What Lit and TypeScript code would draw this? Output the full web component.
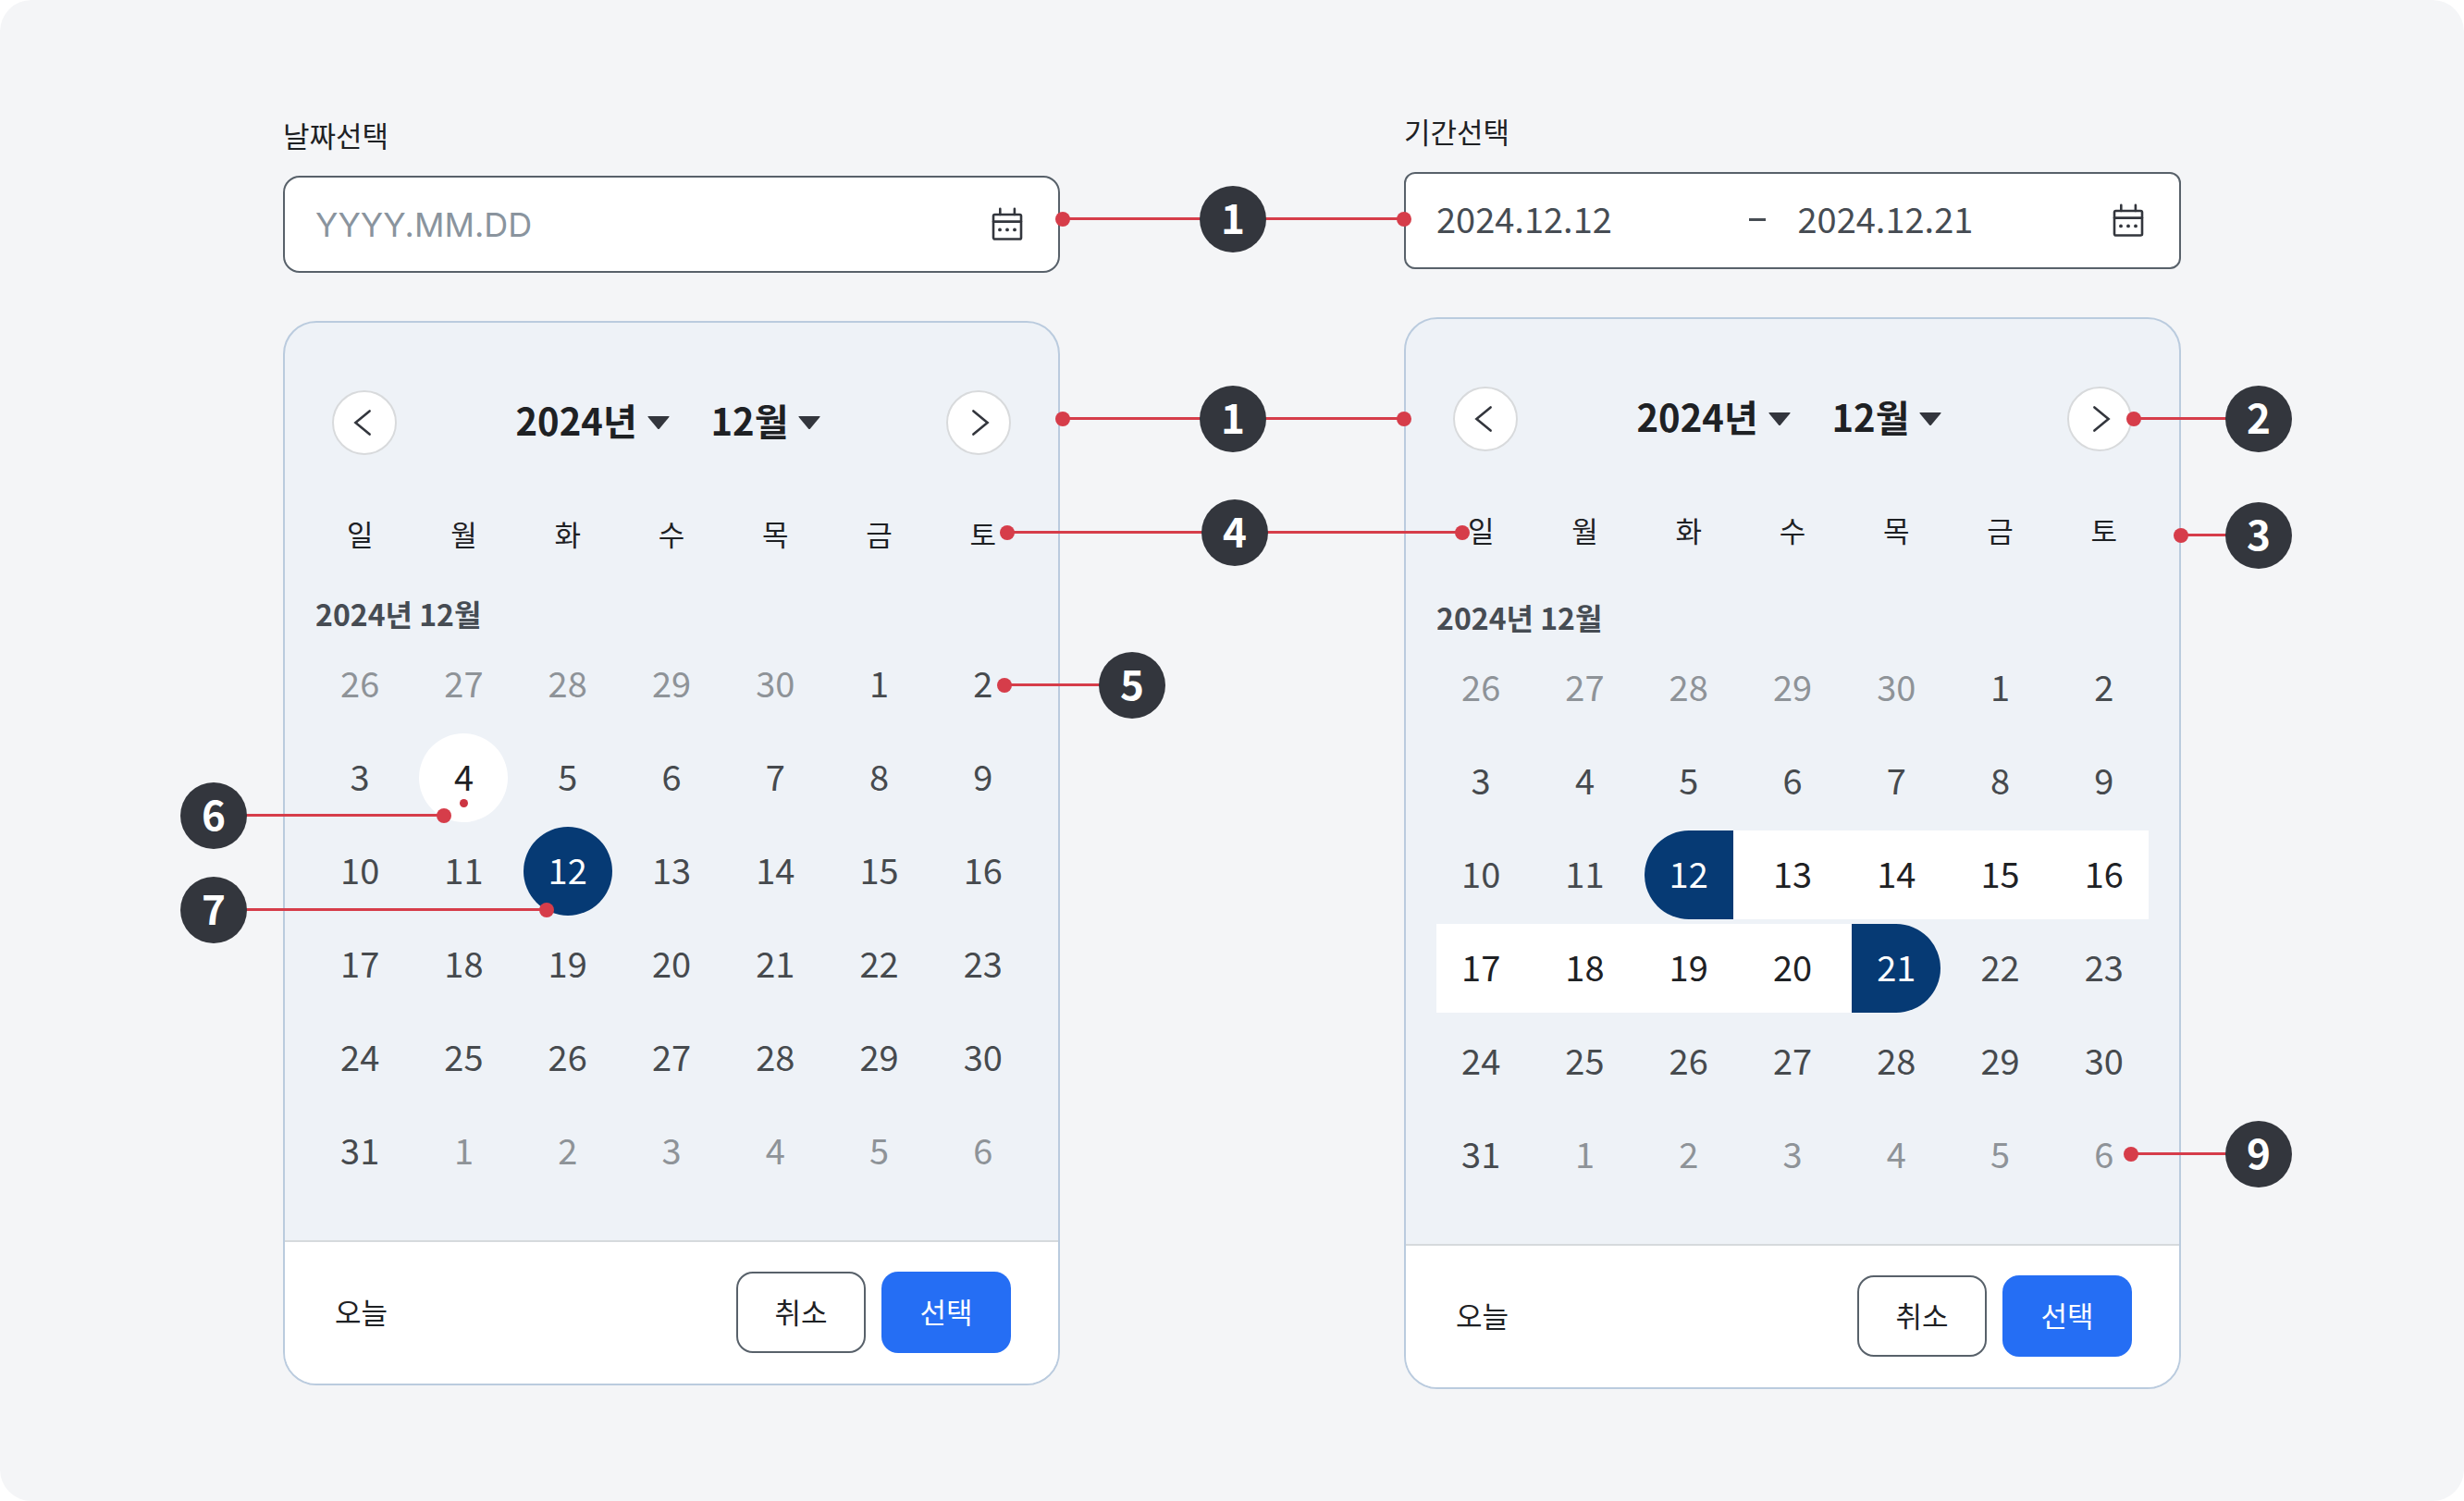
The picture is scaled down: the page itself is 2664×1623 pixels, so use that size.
import { LitElement, html, css, svg, nothing } from "lit";
import { customElement, property } from "lit/decorators.js";
import { classMap } from "lit/directives/class-map.js";
import { styleMap } from "lit/directives/style-map.js";

const WEEKDAYS = ["일", "월", "화", "수", "목", "금", "토"];

/** Width of the canvas on which the callout positions are given. */
const CANVAS = 2664;
const pct = (x: number) => `${(x / CANVAS) * 100}%`;

interface Day {
  label: number;
  outside: boolean;
}

function buildWeeks(): Day[][] {
  const days: Day[] = [];
  for (let d = 26; d <= 30; d++) days.push({ label: d, outside: true });
  for (let d = 1; d <= 31; d++) days.push({ label: d, outside: false });
  for (let d = 1; d <= 6; d++) days.push({ label: d, outside: true });
  const weeks: Day[][] = [];
  for (let i = 0; i < days.length; i += 7) weeks.push(days.slice(i, i + 7));
  return weeks;
}

const reset = css`
  * {
    box-sizing: border-box;
  }
  button,
  input,
  select {
    font: inherit;
    color: inherit;
    margin: 0;
    padding: 0;
    border: 0;
    background: none;
  }
  button,
  select {
    cursor: pointer;
  }
  svg {
    display: block;
    fill: none;
  }
`;

const calendarIcon = html`
  <svg class="icon" width="40" height="40" viewBox="0 0 40 40" aria-hidden="true">
    ${svg`
      <rect x="5" y="10" width="30" height="26.5" rx="1.6" stroke="#33363d" stroke-width="2.6"/>
      <path d="M5 17.6H35M12.3 3.8V10M27.9 3.8V10" stroke="#33363d" stroke-width="2.6" stroke-linecap="round"/>
      <circle cx="12" cy="26.4" r="1.9" fill="#33363d"/>
      <circle cx="20" cy="26.4" r="1.9" fill="#33363d"/>
      <circle cx="28" cy="26.4" r="1.9" fill="#33363d"/>
    `}
  </svg>
`;

@customElement("date-field")
export class DateField extends LitElement {
  @property() label = "";
  @property({ type: Boolean }) range = false;
  @property() start = "";
  @property() end = "";

  static styles = [
    reset,
    css`
      :host {
        display: block;
      }
      .label {
        display: block;
        height: 40px;
        margin-bottom: 22px;
        font-size: 31px;
        line-height: 36px;
        color: #1e2124;
      }
      .box {
        display: flex;
        align-items: center;
        height: 105px;
        padding: 0 35px 2px 33px;
        border: 2px solid #58616a;
        border-radius: 18px;
        background: #fff;
        color: #464c53;
        font-size: 38px;
      }
      .box.range {
        border-radius: 12px;
      }
      .input {
        flex: 1 1 0;
        min-width: 0;
        height: 60px;
        padding-bottom: 4px;
        line-height: 56px;
        outline: none;
      }
      .input::placeholder {
        color: #8a949e;
        font-family: Inter, sans-serif;
        font-size: 36px;
        opacity: 1;
      }
      .dash {
        flex: none;
        width: 18px;
        height: 3px;
        margin-right: 35px;
        background: #464c53;
      }
    `,
  ];

  render() {
    return html`
      <label class="label" for="start">${this.label}</label>
      <div class=${classMap({ box: true, range: this.range })}>
        <input id="start" class="input" type="text" placeholder="YYYY.MM.DD" .value=${this.start} />
        ${this.range
          ? html`<span class="dash"></span>
              <input class="input" type="text" aria-label="종료일" .value=${this.end} />`
          : nothing}
        <button type="button" aria-label="달력 열기">${calendarIcon}</button>
      </div>
    `;
  }
}

@customElement("calendar-card")
export class CalendarCard extends LitElement {
  @property({ type: Number }) today = 0;
  @property({ type: Number }) from = 0;
  @property({ type: Number }) to = 0;

  static styles = [
    reset,
    css`
      :host {
        display: block;
      }
      .card {
        overflow: hidden;
        border: 2px solid #bacbde;
        border-radius: 36px;
        background: #eef2f7;
      }
      .head {
        display: flex;
        align-items: center;
        justify-content: space-between;
        padding: 73px 51px 0;
      }
      .nav {
        display: grid;
        place-items: center;
        width: 70px;
        height: 70px;
        border: 2px solid #d8dadc;
        border-radius: 50%;
        background: #fff;
      }
      .picks {
        display: flex;
        gap: 37px;
      }
      .pick {
        display: flex;
        align-items: center;
        gap: 2px;
      }
      .select {
        appearance: none;
        height: 60px;
        padding-bottom: 6px;
        color: #1e2124;
        font-size: 40px;
        font-weight: 700;
        line-height: 54px;
      }
      .table {
        display: block;
        margin: 67px 25px 48px;
      }
      .thead,
      .tbody {
        display: block;
      }
      .row {
        display: grid;
        grid-template-columns: repeat(7, minmax(0, 1fr));
        margin-top: 5px;
      }
      .names {
        margin: 0;
      }
      .name {
        height: 40px;
        padding: 0;
        color: #1e2124;
        font-size: 31px;
        font-weight: 400;
        line-height: 36px;
      }
      .month-row {
        display: block;
        margin: 46px 0 7px;
      }
      .ranged .month-row {
        margin-top: 54px;
      }
      .month-row + .row {
        margin-top: 0;
      }
      .month {
        display: block;
        height: 40px;
        padding: 0 8px;
        color: #464c53;
        font-size: 32px;
        font-weight: 700;
        line-height: 36px;
        text-align: left;
      }
      .cell {
        display: flex;
        justify-content: center;
        padding: 0;
      }
      .day {
        width: 96px;
        height: 96px;
        padding-bottom: 4px;
        color: #464a4e;
        font-size: 38px;
        line-height: 56px;
        text-align: center;
      }
      .outside {
        color: #8e9398;
      }
      .today {
        position: relative;
        border-radius: 50%;
        background: #fff;
        color: #1e2124;
      }
      .today::after {
        content: "";
        position: absolute;
        top: 71px;
        left: 44px;
        width: 9px;
        height: 9px;
        border-radius: 50%;
        background: #cb3441;
      }
      .picked {
        border-radius: 48px;
        background: #063a74;
        color: #fff;
      }
      .between {
        background: #fff;
      }
      .between .day {
        color: #1e2124;
      }
      .between:first-child {
        margin-left: 8px;
        padding-right: 8px;
      }
      .between:last-child {
        margin-right: 8px;
        padding-left: 8px;
      }
      .first {
        background: linear-gradient(to right, transparent 50%, #fff 50%);
      }
      .first .day {
        border-radius: 48px 0 0 48px;
      }
      .last {
        background: linear-gradient(to left, transparent 50%, #fff 50%);
      }
      .last .day {
        border-radius: 0 48px 48px 0;
      }
      .foot {
        display: flex;
        align-items: center;
        gap: 17px;
        padding: 32px 51px 33px 40px;
        border-top: 2px solid #d6dadd;
        background: #fff;
        font-size: 31px;
      }
      .action {
        height: 88px;
        padding-bottom: 4px;
        border-radius: 18px;
        color: #1e2124;
      }
      .text {
        padding-left: 14px;
        padding-right: 14px;
        margin-right: auto;
      }
      .outline {
        width: 140px;
        border: 2px solid #58616a;
        background: #fff;
      }
      .primary {
        width: 140px;
        background: #256ef4;
        color: #fff;
      }
    `,
  ];

  private pick(value: string, name: string) {
    return html`
      <span class="pick">
        <select class="select" aria-label=${name}>
          <option>${value}</option>
        </select>
        <svg width="40" height="40" viewBox="0 0 40 40" aria-hidden="true">
          <path d="M9 13H31Q32.2 13 31.4 14L21 26.4Q20 27.4 19 26.4L8.6 14Q7.8 13 9 13Z" fill="#33363d" />
        </svg>
      </span>
    `;
  }

  private cell(day: Day) {
    const n = day.outside ? -1 : day.label;
    const ranged = this.to > this.from;
    const cell = {
      cell: true,
      first: ranged && n === this.from,
      last: ranged && n === this.to,
      between: ranged && n > this.from && n < this.to,
    };
    const button = {
      day: true,
      outside: day.outside,
      today: n === this.today,
      picked: n === this.from || (ranged && n === this.to),
    };
    return html`<td class=${classMap(cell)}>
      <button type="button" class=${classMap(button)}>${day.label}</button>
    </td>`;
  }

  private arrow(d: string) {
    return html`<svg width="40" height="40" viewBox="0 0 40 40" aria-hidden="true">
      <path d=${d} stroke="#33363d" stroke-width="2.6" stroke-linecap="round" />
    </svg>`;
  }

  render() {
    return html`
      <section class=${classMap({ card: true, ranged: this.to > this.from })}>
        <header class="head">
          <button type="button" class="nav" aria-label="이전 달">${this.arrow("M25.6 7.4L10.4 20L25.6 32.6")}</button>
          <div class="picks">${this.pick("2024년", "연도")} ${this.pick("12월", "월")}</div>
          <button type="button" class="nav" aria-label="다음 달">${this.arrow("M14.4 7.4L29.6 20L14.4 32.6")}</button>
        </header>
        <table class="table">
          <thead class="thead">
            <tr class="row names">
              ${WEEKDAYS.map((w) => html`<th class="name" scope="col">${w}</th>`)}
            </tr>
          </thead>
          <tbody class="tbody">
            <tr class="month-row">
              <th class="month" colspan="7">2024년 12월</th>
            </tr>
            ${buildWeeks().map((week) => html`<tr class="row">${week.map((d) => this.cell(d))}</tr>`)}
          </tbody>
        </table>
        <footer class="foot">
          <button type="button" class="action text">오늘</button>
          <button type="button" class="action outline">취소</button>
          <button type="button" class="action primary">선택</button>
        </footer>
      </section>
    `;
  }
}

interface Callout {
  n: number;
  /** Centre of the badge. */
  x: number;
  y: number;
  /** Points on the parts that the badge names. */
  ends: number[];
}

const CALLOUTS: Callout[] = [
  { n: 1, x: 1333, y: 237, ends: [1149, 1518] },
  { n: 1, x: 1333, y: 453, ends: [1149, 1518] },
  { n: 2, x: 2442, y: 453, ends: [2307] },
  { n: 3, x: 2442, y: 579, ends: [2358] },
  { n: 4, x: 1335, y: 576, ends: [1089, 1581] },
  { n: 5, x: 1224, y: 741, ends: [1086] },
  { n: 6, x: 231, y: 882, ends: [480] },
  { n: 7, x: 231, y: 984, ends: [591] },
  { n: 9, x: 2442, y: 1248, ends: [2304] },
];

@customElement("app-root")
export class AppRoot extends LitElement {
  static styles = [
    reset,
    css`
      :host {
        display: block;
        background: #fff;
        font-family: "Noto Sans CJK KR", "Noto Sans", sans-serif;
      }
      .stage {
        position: relative;
        display: grid;
        grid-template-columns:
          minmax(0, 306fr) minmax(0, 840fr) minmax(0, 372fr)
          minmax(0, 840fr) minmax(0, 306fr);
        align-items: start;
        min-height: 100vh;
        padding: 124px 0 100px;
        border-radius: 34px;
        background: #f4f5f7;
      }
      .panel {
        display: grid;
        grid-template-columns: minmax(0, 1fr);
        gap: 52px;
      }
      .single {
        grid-column: 2;
        padding-top: 4px;
      }
      .period {
        grid-column: 4;
      }
      .line {
        position: absolute;
        height: 3px;
        margin-top: -2px;
        background: #d63d4a;
      }
      .dot {
        position: absolute;
        width: 16px;
        height: 16px;
        margin: -8px 0 0 -8px;
        border-radius: 50%;
        background: #d63d4a;
      }
      .badge {
        position: absolute;
        width: 72px;
        height: 72px;
        margin: -36px 0 0 -36px;
        border-radius: 50%;
        background: #33363d;
        color: #fff;
        font-size: 44px;
        font-weight: 700;
        line-height: 66px;
        text-align: center;
      }
    `,
  ];

  private callout(c: Callout) {
    const top = `${c.y}px`;
    return html`
      ${c.ends.map(
        (e) => html`
          <span
            class="line"
            style=${styleMap({ top, left: pct(Math.min(e, c.x)), width: pct(Math.abs(e - c.x)) })}
          ></span>
          <span class="dot" style=${styleMap({ top, left: pct(e) })}></span>
        `,
      )}
      <span class="badge" style=${styleMap({ top, left: pct(c.x) })}>${c.n}</span>
    `;
  }

  render() {
    return html`
      <main class="stage">
        <div class="panel single">
          <date-field label="날짜선택"></date-field>
          <calendar-card .today=${4} .from=${12}></calendar-card>
        </div>
        <div class="panel period">
          <date-field label="기간선택" range start="2024.12.12" end="2024.12.21"></date-field>
          <calendar-card .from=${12} .to=${21}></calendar-card>
        </div>
        ${CALLOUTS.map((c) => this.callout(c))}
      </main>
    `;
  }
}
